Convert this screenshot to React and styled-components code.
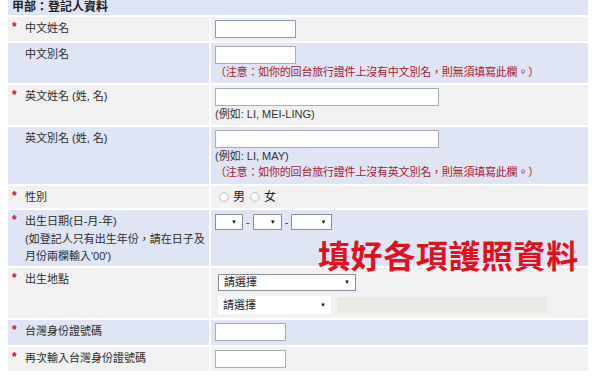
import React from 'react';
import styled, { createGlobalStyle } from 'styled-components';

const GlobalStyle = createGlobalStyle`
  html, body {
    margin: 0;
    padding: 0;
    background: #fff;
  }
  body {
    font-family: "Liberation Sans", "Noto Sans CJK TC", sans-serif;
    color: #333;
  }
`;

const BLUE = '#dfe5f4';
const GRAY = '#f1f1f1';

const Page = styled.div`
  position: relative;
  width: 580px;
  padding-left: 8px;
`;

const Form = styled.div`
  display: flex;
  flex-direction: column;
  gap: 2px;
`;

const Header = styled.div`
  background: ${BLUE};
  height: 15px;
  padding-left: 4px;
  font-size: 12px;
  font-weight: bold;
  line-height: 15px;
  color: #222;
`;

const Row = styled.div`
  display: grid;
  grid-template-columns: 201px 1fr;
  gap: 2px;
  min-height: ${({ h }) => h}px;
`;

const LabelCell = styled.div`
  display: flex;
  background: ${({ tone }) => tone};
  padding: 3px 0 0 4px;
  font-size: 11px;
  line-height: ${({ lh }) => lh || 17}px;
  white-space: nowrap;
  color: #2a2a2a;
`;

const Star = styled.span`
  width: 13px;
  flex: none;
  color: #c8102e;
  font-size: 12px;
  font-weight: bold;
  line-height: 14px;
  visibility: ${({ on }) => (on ? 'visible' : 'hidden')};
`;

const ValueCell = styled.div`
  background: ${({ tone }) => tone};
  padding: ${({ pad }) => pad || '3px 4px'};
  font-size: 11px;
  line-height: 16px;
  display: flex;
  flex-direction: column;
  align-items: flex-start;
`;

const TextBox = styled.div`
  width: ${({ w }) => w}px;
  height: 18px;
  box-sizing: border-box;
  background: #fff;
  border: 1px solid ${({ focus }) => (focus ? '#7f9bc0' : '#a9adb4')};
`;

const Hint = styled.div`
  color: #333;
  font-size: 11px;
  line-height: 16px;
`;

const Note = styled.div`
  color: #a8172d;
  font-size: 11px;
  line-height: 16px;
  letter-spacing: -0.2px;
`;

const Inline = styled.div`
  display: flex;
  align-items: center;
  margin-top: ${({ mt }) => mt || 0}px;
`;

const Radio = styled.span`
  width: 8px;
  height: 8px;
  border-radius: 50%;
  border: 1px solid #c4c4c4;
  background: radial-gradient(circle at 40% 40%, #fff 0%, #e8e8e8 100%);
  margin: 0 4px 0 4px;
`;

const RadioText = styled.span`
  font-size: 12px;
  color: #222;
  margin-right: 1px;
`;

const Select = styled.div`
  width: ${({ w }) => w}px;
  height: ${({ h }) => h || 17}px;
  box-sizing: border-box;
  background: #fff;
  border: ${({ bare }) => (bare ? 'none' : '1px solid #8a8d93')};
  display: flex;
  align-items: center;
  justify-content: space-between;
  padding: 0 5px 0 5px;
  font-size: 11px;
  color: #222;
`;

const Arrow = styled.span`
  font-size: 6px;
  color: #111;
  line-height: 1;
`;

const Dash = styled.span`
  font-size: 11px;
  margin: 0 3px;
`;

const Disabled = styled.div`
  width: 210px;
  height: 16px;
  background: #e9e8e3;
  margin-left: 6px;
`;

const Stamp = styled.div`
  position: absolute;
  left: 318px;
  top: 238px;
  font-family: "Noto Sans CJK TC", sans-serif;
  font-size: 32px;
  font-weight: bold;
  line-height: 1;
  color: #e30f1f;
  letter-spacing: 0.6px;
  white-space: nowrap;
`;

const Label = ({ star, tone, lh, children }) => (
  <LabelCell tone={tone} lh={lh}>
    <Star on={star}>*</Star>
    <span>{children}</span>
  </LabelCell>
);

const App = () => (
  <Page>
    <GlobalStyle />
    <Form>
      <Header>甲部：登記人資料</Header>

      <Row h={24}>
        <Label star tone={GRAY}>中文姓名</Label>
        <ValueCell tone={GRAY}>
          <TextBox w={81} focus />
        </ValueCell>
      </Row>

      <Row h={39}>
        <Label tone={BLUE}>中文別名</Label>
        <ValueCell tone={BLUE}>
          <TextBox w={81} />
          <Note>（注意：如你的回台旅行證件上沒有中文別名，則無須填寫此欄。）</Note>
        </ValueCell>
      </Row>

      <Row h={39}>
        <Label star tone={GRAY}>英文姓名 (姓, 名)</Label>
        <ValueCell tone={GRAY}>
          <TextBox w={224} />
          <Hint>(例如: LI, MEI-LING)</Hint>
        </ValueCell>
      </Row>

      <Row h={57}>
        <Label tone={BLUE}>英文別名 (姓, 名)</Label>
        <ValueCell tone={BLUE}>
          <TextBox w={224} />
          <Hint>(例如: LI, MAY)</Hint>
          <Note>（注意：如你的回台旅行證件上沒有英文別名，則無須填寫此欄。）</Note>
        </ValueCell>
      </Row>

      <Row h={22}>
        <Label star tone={GRAY}>性別</Label>
        <ValueCell tone={GRAY}>
          <Inline>
            <Radio />
            <RadioText>男</RadioText>
            <Radio />
            <RadioText>女</RadioText>
          </Inline>
        </ValueCell>
      </Row>

      <Row h={55}>
        <Label star tone={BLUE} lh={17.5}>
          出生日期(日-月-年)
          <br />
          (如登記人只有出生年份，請在日子及
          <br />
          月份兩欄輸入'00')
        </Label>
        <ValueCell tone={BLUE}>
          <Inline mt={1}>
            <Select w={28} h={16}>
              <span />
              <Arrow>▼</Arrow>
            </Select>
            <Dash>-</Dash>
            <Select w={29} h={16}>
              <span />
              <Arrow>▼</Arrow>
            </Select>
            <Dash>-</Dash>
            <Select w={41} h={16}>
              <span />
              <Arrow>▼</Arrow>
            </Select>
          </Inline>
        </ValueCell>
      </Row>

      <Row h={50}>
        <Label star tone={GRAY}>出生地點</Label>
        <ValueCell tone={GRAY} pad="6px 4px 3px 7px">
          <Select w={138}>
            <span>請選擇</span>
            <Arrow>▼</Arrow>
          </Select>
          <Inline mt={5}>
            <Select w={113} h={18} bare>
              <span>請選擇</span>
              <Arrow>▼</Arrow>
            </Select>
            <Disabled />
          </Inline>
        </ValueCell>
      </Row>

      <Row h={25}>
        <Label star tone={BLUE}>台灣身份證號碼</Label>
        <ValueCell tone={BLUE}>
          <TextBox w={71} />
        </ValueCell>
      </Row>

      <Row h={24}>
        <Label star tone={GRAY}>再次輸入台灣身份證號碼</Label>
        <ValueCell tone={GRAY}>
          <TextBox w={71} />
        </ValueCell>
      </Row>
    </Form>
    <Stamp>填好各項護照資料</Stamp>
  </Page>
);

export default App;
